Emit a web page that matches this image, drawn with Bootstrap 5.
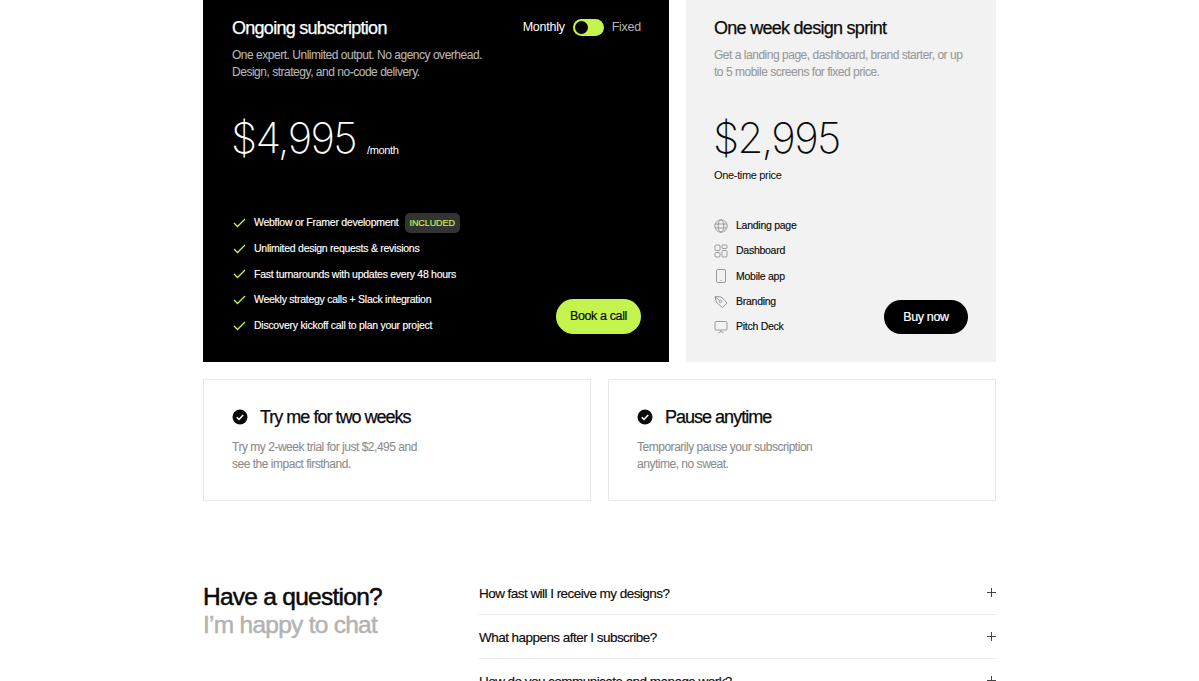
<!DOCTYPE html>
<html lang="en">
<head>
  <meta charset="UTF-8" />
  <meta name="viewport" content="width=device-width, initial-scale=1.0">
  <title>Pricing</title>
  <link href="https://cdn.jsdelivr.net/npm/bootstrap@5.3.0/dist/css/bootstrap.min.css" rel="stylesheet">
  <style>
    :root {
      --lime: #c4f34d;
      --soft: #f2f2f2;
      --line: #e9e9e9;
    }

    html, body { overflow: hidden; }

    body {
      font-family: "Liberation Sans", Arial, sans-serif;
      color: #0a0a0a;
      background: #fff;
    }

    .page-wrap { width: 793px; margin-left: 203px; }

    /* Plans */
    .plan-row { gap: 17px; height: 362px; }
    .plan-dark { width: 466px; background: #000; color: #fff; padding: 16px 28px 0 29px; }
    .plan-soft { width: 310px; background: var(--soft); padding: 16px 28px 0; }
    .plan-title { font-size: 18px; line-height: 24px; font-weight: 400; letter-spacing: -0.04em; margin: 0; -webkit-text-stroke: 0.25px currentColor; }
    .plan-text { font-size: 12px; line-height: 17px; letter-spacing: -0.04em; margin: 7px 0 0; white-space: nowrap; -webkit-text-stroke: 0.1px currentColor; }
    .plan-dark .plan-text { color: #b5b5b5; }
    .plan-soft .plan-text { color: #999; }

    .switch-wrap { font-size: 12.5px; line-height: 20px; letter-spacing: -0.02em; gap: 8px; margin-top: 1px; }
    .switch-off { color: #b5b5b5; }
    .switch-track { width: 31px; height: 17px; border-radius: 9px; background: var(--lime); display: block; padding: 2px; }
    .switch-knob { width: 13px; height: 13px; border-radius: 50%; background: #000; display: block; }

    .price-row { margin-top: 27px; height: 60px; }
    .price-value { font-family: Inter, "Liberation Sans", sans-serif; font-size: 42px; line-height: 60px; font-weight: 250; letter-spacing: -0.04em; margin-left: -1px; }
    .price-note { font-size: 11px; letter-spacing: -0.03em; margin-left: 11px; position: relative; top: 12px; }
    .price-caption { font-size: 11px; line-height: 14px; letter-spacing: -0.03em; }

    .feature-list { list-style: none; margin: 0; padding: 0; }
    .feature-list li { height: 25.4px; font-size: 10.5px; letter-spacing: -0.025em; -webkit-text-stroke: 0.15px currentColor; }
    .list-dark { margin-top: 42.5px; }
    .list-dark li { height: 25.6px; }
    .list-soft { margin-top: 31px; }
    .list-dark svg { margin-left: 1px; margin-right: 8px; }
    .list-soft svg { margin-right: 8px; }
    .tag-included {
      font-size: 9px; letter-spacing: -0.01em; color: var(--lime);
      background: #333; border-radius: 5px; padding: 3px 5px; margin-left: 6px; line-height: 14px;
    }

    .btn-book, .btn-buy {
      border: 0; border-radius: 18px; font-size: 12.5px; letter-spacing: -0.03em; padding: 0;
      margin-bottom: 28px; height: 35px; -webkit-text-stroke: 0.2px currentColor;
    }
    .btn-book { width: 85px; background: var(--lime); color: #0a0a0a; }
    .btn-buy { width: 84px; height: 34px; background: #000; color: #fff; }
    .btn-book:hover { background: var(--lime); color: #0a0a0a; }
    .btn-buy:hover { background: #000; color: #fff; }

    /* Extras */
    .extra-row { gap: 17px; margin-top: 17px; }
    .extra-box { width: 388px; height: 122px; border: 1px solid var(--line); padding: 25px 28px 0; }
    .extra-title { font-size: 18px; line-height: 24px; font-weight: 400; letter-spacing: -0.055em; margin: 0; gap: 12px; -webkit-text-stroke: 0.25px currentColor; }
    .extra-text { font-size: 12px; line-height: 17px; letter-spacing: -0.04em; color: #8d8d8d; margin: 10px 0 0; -webkit-text-stroke: 0.1px currentColor; }

    /* FAQ */
    .faq-row { margin-top: 82px; }
    .faq-heading { width: 276px; font-size: 24.5px; line-height: 28px; font-weight: 400; letter-spacing: -0.03em; margin: 0; -webkit-text-stroke: 0.5px currentColor; }
    .faq-heading span { display: block; color: #b3b3b3; }
    .faq-list { width: 517px; margin-top: -12px; }
    .faq-item { height: 44px; font-size: 13.5px; letter-spacing: -0.04em; border-bottom: 1px solid var(--line); }
    .faq-q { margin-top: 3px; -webkit-text-stroke: 0.15px currentColor; }
  </style>
</head>
<body>
  <div class="page-wrap">
    <!-- Plans -->
    <section class="plan-row d-flex">
      <div class="plan-dark d-flex flex-column">
        <div class="d-flex justify-content-between align-items-start">
          <h2 class="plan-title">Ongoing subscription</h2>
          <div class="switch-wrap d-flex align-items-center">
            <span>Monthly</span>
            <span class="switch-track"><span class="switch-knob"></span></span>
            <span class="switch-off">Fixed</span>
          </div>
        </div>
        <p class="plan-text">One expert. Unlimited output. No agency overhead.<br>Design, strategy, and no-code delivery.</p>
        <div class="price-row d-flex align-items-center">
          <span class="price-value">$4,995</span>
          <span class="price-note">/month</span>
        </div>
        <div class="d-flex justify-content-between align-items-end flex-grow-1">
          <ul class="feature-list list-dark align-self-start">
            <li class="d-flex align-items-center"><svg width="13" height="10" viewBox="0 0 13 10" fill="none" stroke="#c4f34d" stroke-width="1.3"><path d="M1 5l3.5 3.5L12 1"/></svg>Webflow or Framer development<span class="tag-included">INCLUDED</span></li>
            <li class="d-flex align-items-center"><svg width="13" height="10" viewBox="0 0 13 10" fill="none" stroke="#c4f34d" stroke-width="1.3"><path d="M1 5l3.5 3.5L12 1"/></svg>Unlimited design requests &amp; revisions</li>
            <li class="d-flex align-items-center"><svg width="13" height="10" viewBox="0 0 13 10" fill="none" stroke="#c4f34d" stroke-width="1.3"><path d="M1 5l3.5 3.5L12 1"/></svg>Fast turnarounds with updates every 48 hours</li>
            <li class="d-flex align-items-center"><svg width="13" height="10" viewBox="0 0 13 10" fill="none" stroke="#c4f34d" stroke-width="1.3"><path d="M1 5l3.5 3.5L12 1"/></svg>Weekly strategy calls + Slack integration</li>
            <li class="d-flex align-items-center"><svg width="13" height="10" viewBox="0 0 13 10" fill="none" stroke="#c4f34d" stroke-width="1.3"><path d="M1 5l3.5 3.5L12 1"/></svg>Discovery kickoff call to plan your project</li>
          </ul>
          <button class="btn btn-book" type="button">Book a call</button>
        </div>
      </div>

      <div class="plan-soft d-flex flex-column">
        <h2 class="plan-title">One week design sprint</h2>
        <p class="plan-text">Get a landing page, dashboard, brand starter, or up<br>to 5 mobile screens for fixed price.</p>
        <div class="price-row d-flex align-items-center">
          <span class="price-value">$2,995</span>
        </div>
        <div class="price-caption">One-time price</div>
        <div class="d-flex justify-content-between align-items-end flex-grow-1">
          <ul class="feature-list list-soft align-self-start">
            <li class="d-flex align-items-center"><svg width="14" height="14" viewBox="0 0 14 14" fill="none" stroke="#9a9a9a"><circle cx="7" cy="7" r="6.2"/><ellipse cx="7" cy="7" rx="2.8" ry="6.2"/><path d="M1 5h12M1 9h12"/></svg>Landing page</li>
            <li class="d-flex align-items-center"><svg width="14" height="14" viewBox="0 0 14 14" fill="none" stroke="#9a9a9a"><rect x="1" y="1" width="5" height="5.5" rx="1"/><rect x="8" y="1" width="5" height="3.5" rx="1"/><rect x="1" y="8.500" width="5" height="4.5" rx="1"/><rect x="8" y="6.500" width="5" height="6.5" rx="1"/></svg>Dashboard</li>
            <li class="d-flex align-items-center"><svg width="14" height="14" viewBox="0 0 14 14" fill="none" stroke="#9a9a9a"><rect x="2.5" y="0.5" width="9" height="13" rx="1.5"/><path d="M6.5 11.5h1"/></svg>Mobile app</li>
            <li class="d-flex align-items-center"><svg width="14" height="14" viewBox="0 0 14 14" fill="none" stroke="#9a9a9a"><path d="M1 1.500l6.500 0.500 5.500 6-4.500 4.500-6-5z"/><circle cx="6.500" cy="6.500" r="1.200"/><path d="M1 1.500l4.700 4.200"/></svg>Branding</li>
            <li class="d-flex align-items-center"><svg width="14" height="14" viewBox="0 0 14 14" fill="none" stroke="#9a9a9a"><rect x="1" y="1.500" width="12" height="8.500" rx="1"/><path d="M7 10v2M4.500 13l2.500-1.500L9.500 13"/></svg>Pitch Deck</li>
          </ul>
          <button class="btn btn-buy" type="button">Buy now</button>
        </div>
      </div>
    </section>

    <!-- Extras -->
    <section class="extra-row d-flex">
      <div class="extra-box">
        <h3 class="extra-title d-flex align-items-center"><svg width="16" height="16" viewBox="0 0 16 16"><circle cx="8" cy="8" r="7.5" fill="#0a0a0a"/><path d="M4.8 8.200l2.200 2.200 4.200-4.400" fill="none" stroke="#fff" stroke-width="1.5"/></svg>Try me for two weeks</h3>
        <p class="extra-text">Try my 2-week trial for just $2,495 and<br>see the impact firsthand.</p>
      </div>
      <div class="extra-box">
        <h3 class="extra-title d-flex align-items-center"><svg width="16" height="16" viewBox="0 0 16 16"><circle cx="8" cy="8" r="7.5" fill="#0a0a0a"/><path d="M4.8 8.200l2.200 2.200 4.200-4.400" fill="none" stroke="#fff" stroke-width="1.5"/></svg>Pause anytime</h3>
        <p class="extra-text">Temporarily pause your subscription<br>anytime, no sweat.</p>
      </div>
    </section>

    <!-- FAQ -->
    <section class="faq-row d-flex">
      <h2 class="faq-heading">Have a question?<span>I’m happy to chat</span></h2>
      <div class="faq-list">
        <div class="faq-item d-flex justify-content-between align-items-center"><span class="faq-q">How fast will I receive my designs?</span><svg width="9" height="9" viewBox="0 0 9 9" stroke="#444"><path d="M4.500 0v9M0 4.500h9"/></svg></div>
        <div class="faq-item d-flex justify-content-between align-items-center"><span class="faq-q">What happens after I subscribe?</span><svg width="9" height="9" viewBox="0 0 9 9" stroke="#444"><path d="M4.500 0v9M0 4.500h9"/></svg></div>
        <div class="faq-item d-flex justify-content-between align-items-center"><span class="faq-q">How do you communicate and manage work?</span><svg width="9" height="9" viewBox="0 0 9 9" stroke="#444"><path d="M4.500 0v9M0 4.500h9"/></svg></div>
      </div>
    </section>
  </div>

  <script src="https://cdn.jsdelivr.net/npm/bootstrap@5.3.0/dist/js/bootstrap.bundle.min.js"></script>
</body>
</html>
